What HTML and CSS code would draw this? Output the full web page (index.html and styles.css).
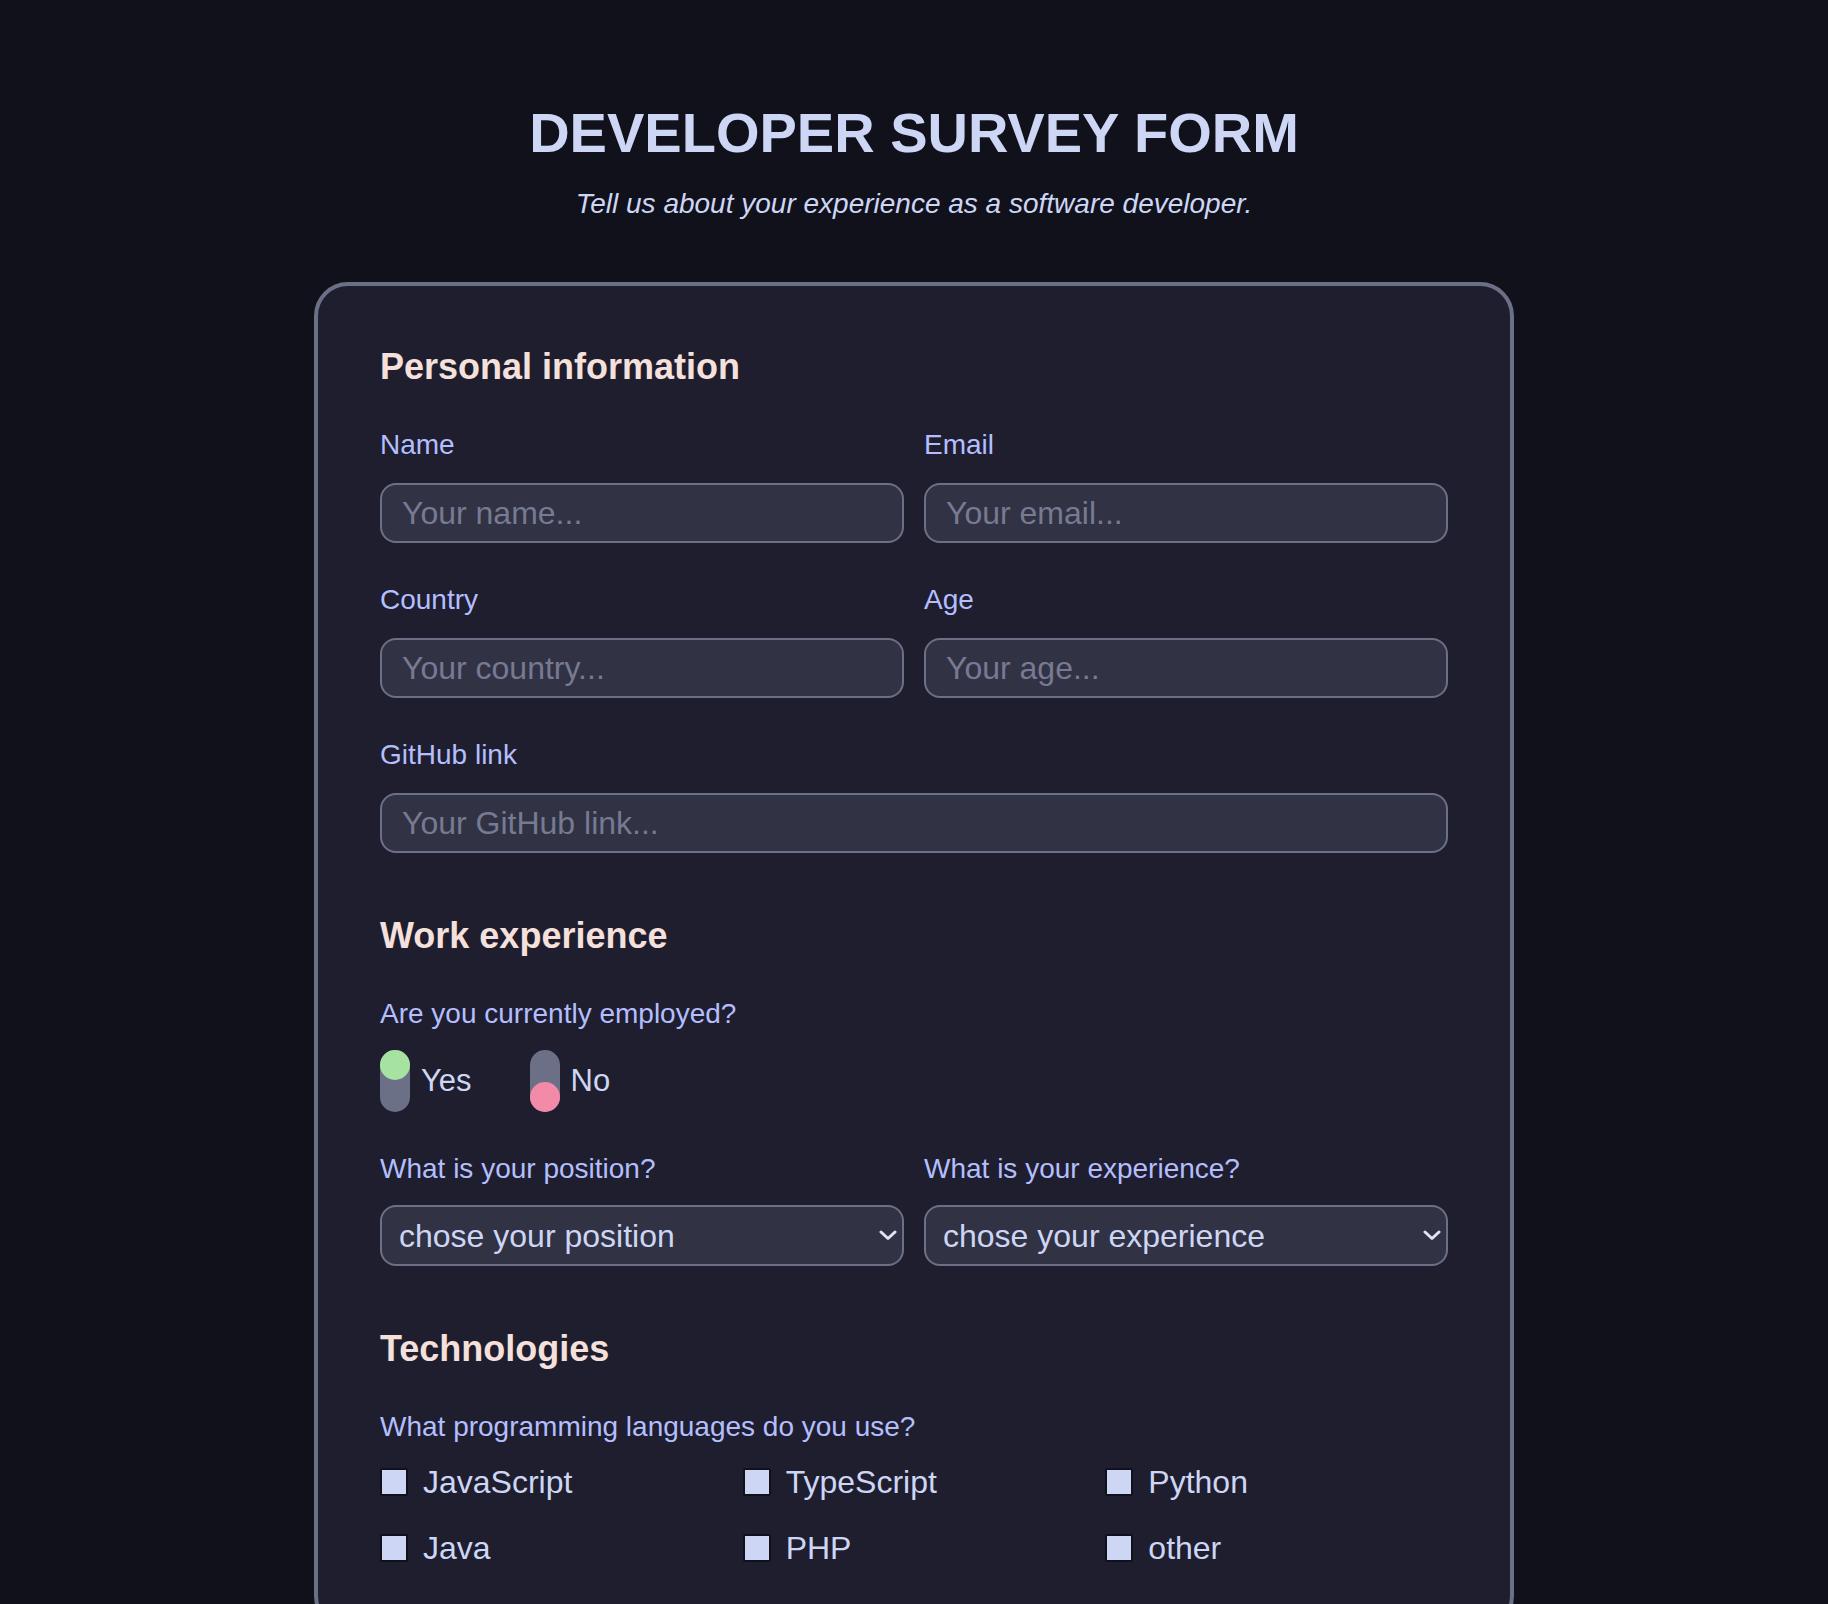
FILE: index.html
```html
<!DOCTYPE html>
<html lang="en">
<head>
<meta charset="utf-8">
<title>Developer Survey Form</title>
<link rel="stylesheet" href="styles.css">
</head>
<body>
<main class="page">
  <header class="intro">
    <h1 class="title">DEVELOPER SURVEY FORM</h1>
    <p class="subtitle">Tell us about your experience as a software developer.</p>
  </header>

  <form class="card">
    <section class="section">
      <h2 class="section-title">Personal information</h2>
      <div class="grid-2">
        <div class="field">
          <label class="label" for="name">Name</label>
          <input class="input" id="name" type="text" placeholder="Your name...">
        </div>
        <div class="field">
          <label class="label" for="email">Email</label>
          <input class="input" id="email" type="email" placeholder="Your email...">
        </div>
        <div class="field">
          <label class="label" for="country">Country</label>
          <input class="input" id="country" type="text" placeholder="Your country...">
        </div>
        <div class="field">
          <label class="label" for="age">Age</label>
          <input class="input" id="age" type="text" placeholder="Your age...">
        </div>
        <div class="field span-2">
          <label class="label" for="github">GitHub link</label>
          <input class="input" id="github" type="text" placeholder="Your GitHub link...">
        </div>
      </div>
    </section>

    <section class="section">
      <h2 class="section-title">Work experience</h2>
      <div class="field field-tight">
        <span class="label">Are you currently employed?</span>
        <div class="toggles">
          <label class="toggle">
            <span class="track"><span class="knob knob-yes"></span></span>
            <span class="toggle-text">Yes</span>
          </label>
          <label class="toggle">
            <span class="track track-bottom"><span class="knob knob-no"></span></span>
            <span class="toggle-text">No</span>
          </label>
        </div>
      </div>
      <div class="grid-2">
        <div class="field field-select">
          <label class="label" for="position">What is your position?</label>
          <div class="select-wrap">
            <select class="select" id="position">
              <option>chose your position</option>
            </select>
            <svg class="chevron" width="18" height="11" viewBox="0 0 18 11" aria-hidden="true">
              <path d="M2 2 L9 8.5 L16 2" fill="none" stroke="#dfe3f7" stroke-width="3" stroke-linecap="round" stroke-linejoin="round"/>
            </svg>
          </div>
        </div>
        <div class="field field-select">
          <label class="label" for="experience">What is your experience?</label>
          <div class="select-wrap">
            <select class="select" id="experience">
              <option>chose your experience</option>
            </select>
            <svg class="chevron" width="18" height="11" viewBox="0 0 18 11" aria-hidden="true">
              <path d="M2 2 L9 8.5 L16 2" fill="none" stroke="#dfe3f7" stroke-width="3" stroke-linecap="round" stroke-linejoin="round"/>
            </svg>
          </div>
        </div>
      </div>
    </section>

    <section class="section">
      <h2 class="section-title">Technologies</h2>
      <div class="field field-checks">
        <span class="label">What programming languages do you use?</span>
        <div class="checks">
          <label class="check"><span class="box"></span><span class="check-text">JavaScript</span></label>
          <label class="check"><span class="box"></span><span class="check-text">TypeScript</span></label>
          <label class="check"><span class="box"></span><span class="check-text">Python</span></label>
          <label class="check"><span class="box"></span><span class="check-text">Java</span></label>
          <label class="check"><span class="box"></span><span class="check-text">PHP</span></label>
          <label class="check"><span class="box"></span><span class="check-text">other</span></label>
        </div>
      </div>
    </section>
  </form>
</main>
</body>
</html>
```

FILE: styles.css
```css
* {
  box-sizing: border-box;
}

html, body {
  margin: 0;
  padding: 0;
}

body {
  background: #11111b;
  color: #cdd6f4;
  font-family: "Liberation Sans", Arial, sans-serif;
}

.page {
  padding-top: 101px;
  padding-bottom: 60px;
}

.intro {
  text-align: center;
  margin-bottom: 62px;
}

.title {
  margin: 0 0 23px;
  font-size: 56px;
  line-height: 64px;
  font-weight: 700;
  color: #cdd6f4;
}

.subtitle {
  margin: 0;
  font-size: 28px;
  line-height: 32px;
  font-style: italic;
  color: #cdd6f4;
}

.card {
  width: 1200px;
  margin: 0 auto;
  background: #1e1e2e;
  border: 4px solid #6c7086;
  border-radius: 34px;
  padding: 60px 62px;
  display: flex;
  flex-direction: column;
  gap: 62px;
}

.section {
  display: flex;
  flex-direction: column;
  gap: 42px;
}

.section-title {
  margin: 0;
  font-size: 36px;
  line-height: 42px;
  font-weight: 700;
  color: #f5e0dc;
}

.grid-2 {
  display: grid;
  grid-template-columns: 1fr 1fr;
  column-gap: 20px;
  row-gap: 42px;
}

.span-2 {
  grid-column: 1 / 3;
}

.field {
  display: flex;
  flex-direction: column;
  gap: 23px;
}

.field-tight {
  gap: 21px;
}

.field-select {
  gap: 21px;
}

.field-checks {
  gap: 22px;
}

.label {
  font-size: 28px;
  line-height: 30px;
  color: #b4befe;
}

.input,
.select {
  width: 100%;
  height: 60px;
  background: #313244;
  border: 2px solid #6c7086;
  border-radius: 16px;
  color: #cdd6f4;
  font-family: "Liberation Sans", Arial, sans-serif;
  font-size: 32px;
  padding: 0 20px;
  outline: none;
}

.input::placeholder {
  color: #767a92;
  opacity: 1;
}

.select-wrap {
  position: relative;
}

.select {
  appearance: none;
  -webkit-appearance: none;
  height: 61px;
  padding: 0 44px 0 17px;
}

.chevron {
  position: absolute;
  right: 7px;
  top: 25px;
  pointer-events: none;
}

.toggles {
  display: flex;
  align-items: center;
  gap: 58px;
}

.toggle {
  display: flex;
  align-items: center;
  gap: 11px;
}

.track {
  width: 30px;
  height: 62px;
  border-radius: 15px;
  background: #6c7086;
  display: flex;
  flex-direction: column;
  justify-content: flex-start;
}

.track-bottom {
  justify-content: flex-end;
}

.knob {
  width: 30px;
  height: 30px;
  border-radius: 50%;
}

.knob-yes {
  background: #a6e3a1;
}

.knob-no {
  background: #f38ba8;
}

.toggle-text {
  font-size: 31px;
  line-height: 36px;
  color: #cdd6f4;
}

.checks {
  display: grid;
  grid-template-columns: repeat(3, 1fr);
  column-gap: 20px;
  row-gap: 30px;
}

.check {
  display: flex;
  align-items: center;
  gap: 15px;
  height: 36px;
}

.box {
  width: 28px;
  height: 28px;
  flex: none;
  background: #cdd6f4;
  border: 2px solid #11111b;
  border-radius: 2px;
}

.check-text {
  font-size: 32px;
  line-height: 36px;
  color: #cdd6f4;
}
```
